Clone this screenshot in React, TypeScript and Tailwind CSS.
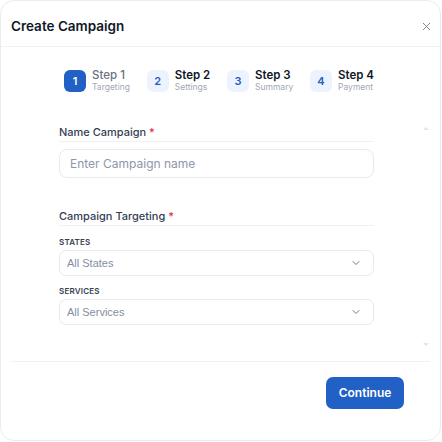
import { ChevronDown, X } from "lucide-react";

const steps = [
  { n: 1, title: "Step 1", sub: "Targeting", active: true },
  { n: 2, title: "Step 2", sub: "Settings", active: false },
  { n: 3, title: "Step 3", sub: "Summary", active: false },
  { n: 4, title: "Step 4", sub: "Payment", active: false },
];

const Select = ({ label, value, className }: { label: string; value: string; className?: string }) => (
  <div className={"flex flex-col " + (className ?? "")}>
    <span className="text-[8px] font-semibold leading-[8px] tracking-wide text-[#374151]">{label}</span>
    <div className="mt-[4px] flex h-[26px] items-center justify-between rounded-[7px] border border-[#e8eaf0] pl-[7px] pr-[11px]">
      <span className="font-['Liberation_Sans',sans-serif] text-[11px] text-[#858da3]">{value}</span>
      <ChevronDown size={12} strokeWidth={1.75} className="text-[#5b6483]" />
    </div>
  </div>
);

const App = () => {
  return (
    <div className="h-[442px] w-[442px] bg-white font-['Inter',sans-serif]">
      <div className="flex h-[441px] w-[441px] flex-col rounded-[14px] border border-[#ececec] bg-white">
        <div className="flex h-[46px] shrink-0 items-center justify-between border-b border-[#f2f2f2] pl-[10px] pr-[7px] pt-[5px]">
          <h2 className="text-[13.5px] font-semibold text-[#101828]">Create Campaign</h2>
          <X size={13} strokeWidth={1.5} className="text-[#6b6b6b]" />
        </div>

        <div className="relative mx-[10px] flex-1 border-b border-[#f2f2f2] pl-[48px] pr-[56px] pt-[22px]">
          <div className="flex justify-between whitespace-nowrap pl-[5px]">
            {steps.map((s) => (
              <div key={s.n} className="flex shrink-0 items-center gap-[6px]">
                <div
                  className={
                    s.active
                      ? "flex h-[22px] w-[22px] items-center justify-center rounded-[6px] bg-[#2160c4] text-[11px] font-semibold text-white"
                      : "flex h-[22px] w-[22px] items-center justify-center rounded-[6px] bg-[#edf3fe] text-[11px] font-semibold text-[#2160c4]"
                  }
                >
                  {s.n}
                </div>
                <div className="flex flex-col">
                  <span
                    className={
                      s.active
                        ? "text-[11.5px] font-medium leading-[13px] text-[#6b7280]"
                        : "text-[11.5px] font-semibold leading-[13px] text-[#111827]"
                    }
                  >
                    {s.title}
                  </span>
                  <span className="text-[8.5px] leading-[11px] text-[#a1a7b6]">{s.sub}</span>
                </div>
              </div>
            ))}
          </div>

          <div className="mt-[33px] flex flex-col">
            <label className="border-b border-[#eef0f3] pb-[2px] text-[11px] font-medium leading-[13px] text-[#344054]">
              Name Campaign <span className="text-[#e11d48]">*</span>
            </label>
            <div className="mt-[7px] flex h-[29px] items-center rounded-[8px] border border-[#e8eaf0] px-[10px]">
              <span className="text-[12px] text-[#8e96ab]">Enter Campaign name</span>
            </div>
          </div>

          <div className="mt-[32px] flex flex-col">
            <label className="border-b border-[#eef0f3] pb-[2px] text-[11px] font-medium leading-[13px] text-[#344054]">
              Campaign Targeting <span className="text-[#e11d48]">*</span>
            </label>
            <Select className="mt-[12px]" label="STATES" value="All States" />
            <Select className="mt-[11px]" label="SERVICES" value="All Services" />
          </div>

          <span className="absolute right-[1px] top-[80px] h-0 w-0 border-x-[3px] border-b-[3px] border-x-transparent border-b-[#e5e5e5]" />
          <span className="absolute bottom-[15px] right-[1px] h-0 w-0 border-x-[3px] border-t-[3px] border-x-transparent border-t-[#e5e5e5]" />
        </div>

        <div className="flex h-[78px] shrink-0 justify-end pr-[36px] pt-[15px]">
          <button className="h-[32px] w-[78px] rounded-[7px] bg-[#2160c4] text-[12px] font-semibold text-white">
            Continue
          </button>
        </div>
      </div>
    </div>
  );
};

export default App;
